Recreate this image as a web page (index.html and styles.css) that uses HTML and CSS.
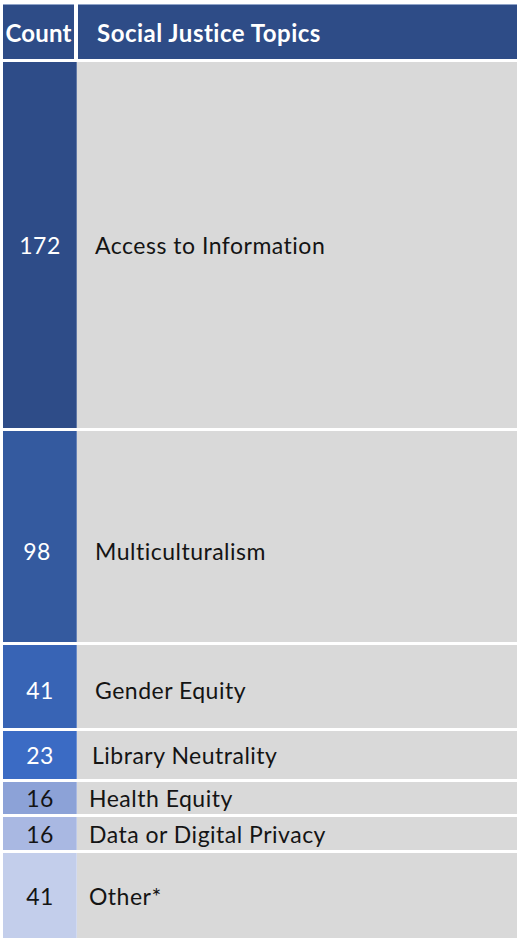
FILE: index.html
```html
<!DOCTYPE html>
<html lang="en">
<head>
    <meta charset="UTF-8">
    <meta name="viewport" content="width=device-width, initial-scale=1.0">
    <title>Social Justice Topics</title>
    <link rel="stylesheet" href="styles.css">
</head>
<body>
    <div class="topics-table">
        <div class="table-head">
            <div class="head-count">Count</div>
            <div class="head-title">Social Justice Topics</div>
        </div>

        <div class="topic-row row-1">
            <div class="count">172</div>
            <div class="topic">Access to Information</div>
        </div>
        <div class="topic-row row-2">
            <div class="count">98</div>
            <div class="topic">Multiculturalism</div>
        </div>
        <div class="topic-row row-3">
            <div class="count">41</div>
            <div class="topic">Gender Equity</div>
        </div>
        <div class="topic-row row-4">
            <div class="count">23</div>
            <div class="topic">Library Neutrality</div>
        </div>
        <div class="topic-row row-5">
            <div class="count">16</div>
            <div class="topic">Health Equity</div>
        </div>
        <div class="topic-row row-6">
            <div class="count">16</div>
            <div class="topic">Data or Digital Privacy</div>
        </div>
        <div class="topic-row row-7">
            <div class="count">41</div>
            <div class="topic">Other*</div>
        </div>
    </div>
</body>
</html>
```

FILE: styles.css
```css
:root {
    --head-bg: #2e4c87;
    --cell-bg: #d9d9d9;
    --text-dark: #141414;
}

body {
    margin: 0;
    background: #ffffff;
    font-family: Lato, "Open Sans", sans-serif;
}

.topics-table {
    display: flex;
    flex-direction: column;
    gap: 3px;
    padding: 4px 3px 0 3px;
    width: 514px;
}

.table-head {
    display: flex;
    gap: 4px;
    height: 55px;
}

.head-count,
.head-title {
    background: var(--head-bg);
    color: #ffffff;
    font-weight: 700;
    font-size: 24px;
    display: flex;
    align-items: center;
    border-top: 1px solid #8fa3c8;
    box-sizing: border-box;
}

.head-count {
    width: 71px;
    justify-content: center;
    letter-spacing: 0.2px;
}

.head-title {
    flex: 1;
    padding-left: 19px;
    letter-spacing: 0.5px;
}

.topic-row {
    display: flex;
    font-size: 23px;
    letter-spacing: 0.5px;
}

.count {
    width: 74px;
    display: flex;
    align-items: center;
    justify-content: center;
    color: #ffffff;
    box-shadow: inset -1px 0 0 rgba(255, 255, 255, 0.25);
}

.topic {
    flex: 1;
    background: var(--cell-bg);
    color: var(--text-dark);
    display: flex;
    align-items: center;
    padding-left: 18px;
}

.row-1 { height: 366px; }
.row-1 .count { background: #2e4c88; }

.row-2 { height: 211px; }
.row-2 .count { background: #345a9f; padding-right: 6px; }
.row-2 .count,
.row-2 .topic { padding-top: 28px; box-sizing: border-box; }

.row-3 { height: 83px; }
.row-3 .count { background: #3864b5; }
.row-3 .count,
.row-3 .topic { padding-top: 6px; box-sizing: border-box; }

.row-4 { height: 48px; }
.row-4 .count { background: #3b6bc4; }
.row-4 .topic { padding-left: 15px; }

.row-5 { height: 32px; }
.row-5 .count { background: #8ca2d7; color: var(--text-dark); }
.row-5 .topic { padding-left: 12px; }

.row-6 { height: 33px; }
.row-6 .count { background: #a9b8e2; color: var(--text-dark); }
.row-6 .topic { padding-left: 12px; }

.row-7 { height: 85px; }
.row-7 .count { background: #c3ceeb; color: var(--text-dark); }
.row-7 .topic { padding-left: 12px; }
```
